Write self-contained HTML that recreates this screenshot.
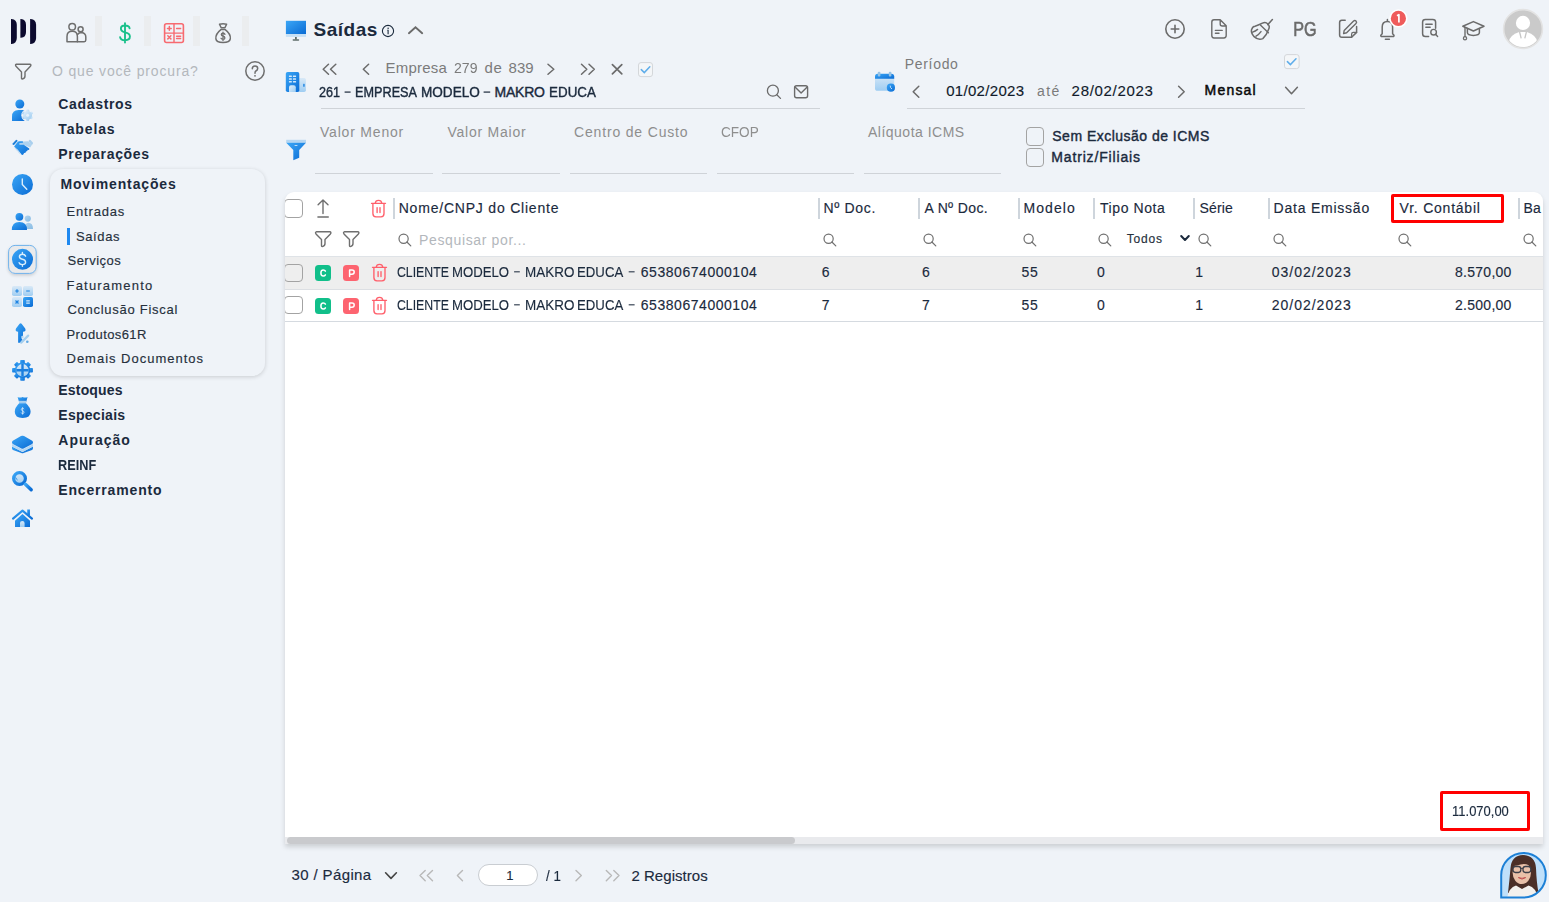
<!DOCTYPE html>
<html><head><meta charset="utf-8"><title>Saídas</title>
<style>
html,body{margin:0;padding:0;}
body{width:1549px;height:902px;overflow:hidden;position:relative;background:#eff3f8;font-family:"Liberation Sans",sans-serif;}
.t{position:absolute;white-space:pre;line-height:1;}
.a{position:absolute;}
svg.a{overflow:visible;}
.strip{position:absolute;top:16px;width:7px;height:30px;background:#ebedef;}
.ul{position:absolute;height:1px;background:#cfd3d8;}
.sep{position:absolute;top:198px;width:2px;height:21px;background:#ced5dc;}
.cb{position:absolute;box-sizing:border-box;border:1.3px solid #a3a3a3;border-radius:4px;background:transparent;}
</style></head>
<body>
<!-- popup menu -->
<div class="a" style="left:50px;top:169px;width:215px;height:207px;border-radius:13px;background:#eff3f8;box-shadow:0 1px 4px rgba(0,0,0,0.16);"></div>
<div class="a" style="left:67px;top:228px;width:3px;height:17px;background:#1e88f0;"></div>

<!-- top strips -->
<div class="strip" style="left:95px"></div>
<div class="strip" style="left:144px"></div>
<div class="strip" style="left:193px"></div>
<div class="strip" style="left:242px"></div>

<!-- underlines -->
<div class="ul" style="left:321px;top:108px;width:499px;"></div>
<div class="ul" style="left:907px;top:108px;width:398px;"></div>
<div class="ul" style="left:315px;top:173px;width:118px;"></div>
<div class="ul" style="left:442px;top:173px;width:118px;"></div>
<div class="ul" style="left:570px;top:173px;width:137px;"></div>
<div class="ul" style="left:717px;top:173px;width:137px;"></div>
<div class="ul" style="left:864px;top:173px;width:137px;"></div>

<!-- checkboxes filter -->
<div class="cb" style="left:1026px;top:127px;width:18px;height:19px;"></div>
<div class="cb" style="left:1026px;top:148px;width:18px;height:19px;"></div>

<!-- table card -->
<div class="a" style="left:285px;top:192px;width:1258px;height:652px;background:#fff;border-radius:9px 9px 0 0;box-shadow:0 3px 5px rgba(0,0,0,0.15);overflow:hidden;">
  <div class="a" style="left:0;top:64px;width:1258px;height:1px;background:#dfe3e7;"></div>
  <div class="a" style="left:0;top:65px;width:1258px;height:32px;background:#eeeeee;"></div>
  <div class="a" style="left:0;top:97px;width:1258px;height:1px;background:#dcdfe3;"></div>
  <div class="a" style="left:0;top:129px;width:1258px;height:1px;background:#d5dae0;"></div>
  <div class="a" style="left:0;top:645px;width:1258px;height:7px;background:#e9eaed;"></div>
  <div class="a" style="left:2px;top:645px;width:508px;height:7px;background:#c9cacd;border-radius:4px;"></div>
  <div class="cb" style="left:-1px;top:7px;width:19px;height:19px;"></div>
  <div class="cb" style="left:-1px;top:72px;width:19px;height:18px;"></div>
  <div class="cb" style="left:-1px;top:104px;width:19px;height:18px;"></div>
</div>
<div class="sep" style="left:393px"></div>
<div class="sep" style="left:818px"></div>
<div class="sep" style="left:918px"></div>
<div class="sep" style="left:1018px"></div>
<div class="sep" style="left:1093px"></div>
<div class="sep" style="left:1193px"></div>
<div class="sep" style="left:1268px"></div>
<div class="sep" style="left:1518px"></div>

<!-- red boxes -->
<div class="a" style="left:1391px;top:194px;width:113px;height:29px;box-sizing:border-box;border:3px solid #ff0000;border-radius:2px;"></div>
<div class="a" style="left:1440px;top:791px;width:90px;height:40px;box-sizing:border-box;border:3px solid #ff0000;border-radius:2px;"></div>

<!-- page input -->
<div class="a" style="left:478px;top:864px;width:60px;height:22px;box-sizing:border-box;border:1px solid #c9cdd2;border-radius:11px;background:#fff;"></div>

<svg class="a" style="left:0;top:0" width="1549" height="902" viewBox="0 0 1549 902">
<defs>
  <linearGradient id="bg1" x1="0" y1="0" x2="1" y2="1"><stop offset="0" stop-color="#3ba6f6"/><stop offset="1" stop-color="#0a6bd4"/></linearGradient>
  <linearGradient id="bl1" x1="0" y1="0" x2="1" y2="1"><stop offset="0" stop-color="#e3f0fb"/><stop offset="1" stop-color="#9ccbf0"/></linearGradient>
  <linearGradient id="ggray" x1="0" y1="0" x2="0" y2="1"><stop offset="0" stop-color="#d9e9f7"/><stop offset="1" stop-color="#9fcdf2"/></linearGradient>
  <linearGradient id="gp2" x1="0" y1="0" x2="1" y2="1"><stop offset="0" stop-color="#b2d4ef"/><stop offset="1" stop-color="#86bbe4"/></linearGradient>
</defs>

<!-- logo -->
<g fill="#0c0a2e">
  <path d="M11,19 H11.5 Q16.8,19.5 16.8,25 V38 Q16.8,43.5 11.5,44 H11 Z"/>
  <path d="M20.4,19 H21 Q26,19.5 26,25 V32 Q26,37.5 21,37.8 H20.4 Z"/>
  <path d="M30.1,19 H30.6 Q36.1,19.5 36.1,25 V38 Q36.1,43.5 30.6,44 H30.1 Z"/>
</g>

<!-- top module icons -->
<g fill="none" stroke="#6e6e6e" stroke-width="1.5" stroke-linecap="round" stroke-linejoin="round">
  <!-- people -->
  <circle cx="72.2" cy="26.8" r="3.3"/>
  <circle cx="80.6" cy="29.2" r="2.5"/>
  <path d="M67,41.7 V36.5 Q67,31.3 72.2,31.3 Q77.4,31.3 77.4,36.5 V41.7 Z"/>
  <path d="M77.4,41.7 H84.2 Q85.8,41.7 85.8,40 V37 Q85.8,33.2 81.6,32.6 Q78.8,32.6 77.5,34.5"/>
  <!-- money bag -->
  <path d="M219.5,24.2 Q223,23.3 226.6,24.2 L224.9,27.8 H221.2 Z"/>
  <path d="M221.2,29.4 H224.9 Q231,34 230.3,38.8 Q229.7,42.5 223,42.5 Q216.4,42.5 215.9,38.8 Q215.3,34 221.2,29.4 Z"/>
</g>
<path d="M225,34.3 Q224.3,33.2 223,33.2 Q221.3,33.2 221.3,34.6 Q221.3,35.8 223,36.2 Q224.9,36.6 224.9,37.9 Q224.9,39.4 223,39.4 Q221.6,39.4 221,38.3 M223,32.2 V40.5" fill="none" stroke="#6e6e6e" stroke-width="1.3" stroke-linecap="round"/>
<!-- green dollar -->
<path d="M129.6,28.3 Q129.2,25.5 125,25.5 Q120.9,25.5 120.9,28.6 Q120.9,31.6 125,32.4 Q129.9,33.3 129.9,36.6 Q129.9,40.3 125,40.3 Q120.6,40.3 120.1,37.2 M125,23.2 V42.6" fill="none" stroke="#19c08b" stroke-width="1.9" stroke-linecap="round"/>
<!-- red calc -->
<rect x="164.6" y="23.7" width="18.8" height="18.8" rx="2" fill="none" stroke="#f76a70" stroke-width="1.6"/>
<path d="M174,23.7 V42.5 M164.6,33.1 H183.4" stroke="#f76a70" stroke-width="1.4"/>
<path d="M167.5,28.4 H171.2 M169.35,26.5 V30.3 M176.6,28.4 H180.6 M167.8,35.8 L170.9,38.9 M170.9,35.8 L167.8,38.9 M176.6,36.2 H180.6 M176.6,38.6 H180.6" stroke="#f76a70" stroke-width="1.5" stroke-linecap="round"/>

<!-- sidebar search filter & help -->
<path transform="translate(-300,-167.6)" d="M316.3,231.8 H330 Q331.6,232.2 330.4,233.9 L325,239.6 V243.6 Q325,246.3 322.3,246.6 Q321.5,246.7 321.5,245.6 V239.6 L316,233.9 Q314.9,232.2 316.3,231.8 Z" fill="none" stroke="#6e6e6e" stroke-width="1.4" stroke-linejoin="round"/>
<circle cx="255" cy="71" r="9.2" fill="none" stroke="#6e6e6e" stroke-width="1.5"/>
<path d="M252.3,68.8 Q252.3,66 255,66 Q257.7,66 257.7,68.5 Q257.7,70.2 255.6,71.2 Q255,71.6 255,73.2" fill="none" stroke="#6e6e6e" stroke-width="1.5" stroke-linecap="round"/>
<circle cx="255" cy="75.8" r="0.9" fill="#6e6e6e"/>

<!-- sidebar blue icons -->
<!-- 1 person gear -->
<circle cx="19.8" cy="104" r="4.5" fill="url(#bg1)"/>
<path d="M12,121 V116.5 Q12,110 18.6,110 H25.5 V121 Z" fill="url(#bg1)"/>
<circle cx="27.6" cy="115.3" r="6.3" fill="#eff3f8"/>
<g transform="translate(27.6,115.3)">
  <g fill="url(#bl1)">
    <rect x="-1.5" y="-5.8" width="3" height="11.6" rx="0.8"/>
    <rect x="-1.5" y="-5.8" width="3" height="11.6" rx="0.8" transform="rotate(60)"/>
    <rect x="-1.5" y="-5.8" width="3" height="11.6" rx="0.8" transform="rotate(120)"/>
    <circle r="4.4"/>
  </g>
  <circle r="1.5" fill="#e6f1fa"/>
</g>
<!-- 2 handshake -->
<g>
  <path d="M12.4,143.7 L15.9,139.9 Q16.6,139.6 17.3,140.3 L17.6,141 L14,145 Q13.2,145.2 12.6,144.6 Z" fill="#1f7fd8"/>
  <path d="M28.3,141.2 L29.6,139.8 Q30.2,139.6 30.8,140.2 L33,142.8 Q33.2,143.6 32.4,144.4 L31.4,145 Z" fill="#a9cfee"/>
  <path d="M19.6,143 Q21,141.4 24,141.4 L28,141.2 L31.8,145 L30.2,147.4 L24.2,145 L20,144.8 Z" fill="#aed2ef"/>
  <path d="M14.1,146.4 L17.4,142.3 Q18,141.3 19.5,141.3 L22.6,141.3 Q23.6,141.9 22.8,142.7 L20.2,142.9 Q19.1,143.3 19.2,144 Q19.4,144.8 20.3,144.8 L23.8,144.8 L29.2,148.5 Q29.7,149.6 28.5,149.9 L27.6,149.7 L27.3,151.1 L26,151.5 L25.5,152.8 L24.1,153.1 L23.3,154.6 Q22.5,155.4 21.7,154.8 L18.2,150.2 Z" fill="url(#bg1)"/>
  <path d="M14.6,147.6 L17.6,151 M16.4,149 L19.2,152.8 M18.2,151 L20.4,154.2" stroke="#b9d8f2" stroke-width="1" opacity="0.9"/>
</g>
<!-- 3 clock -->
<circle cx="22.5" cy="184.4" r="10.5" fill="url(#bg1)"/>
<path d="M22.3,179 V184.5 L26.8,189.3" fill="none" stroke="#dcedfb" stroke-width="1.4" stroke-linecap="round" stroke-linejoin="round"/>
<!-- 4 people -->
<circle cx="27.8" cy="218.6" r="3.1" fill="url(#gp2)"/>
<path d="M24.5,229 Q25,222.8 28.2,222.8 Q33,222.8 33,229 Z" fill="url(#gp2)"/>
<circle cx="19.4" cy="216.8" r="3.9" fill="url(#bg1)"/>
<path d="M11.8,230 Q11.8,222 19.4,222 Q27,222 27,230 Z" fill="url(#bg1)"/>
<!-- 5 dollar selected -->
<filter id="dsh" x="-50%" y="-50%" width="200%" height="200%"><feDropShadow dx="0" dy="1.5" stdDeviation="1.6" flood-color="#000" flood-opacity="0.16"/></filter>
<rect x="8.6" y="245.4" width="27.6" height="28" rx="6.5" fill="#e9eaec" stroke="#6fb2ec" stroke-width="1" filter="url(#dsh)"/>
<circle cx="22.5" cy="259.3" r="10.5" fill="url(#bg1)"/>
<path d="M25.6,256.2 Q24.9,254.2 22.4,254.2 Q19.4,254.2 19.4,256.6 Q19.4,258.7 22.4,259.3 Q25.6,260 25.6,262.3 Q25.6,264.6 22.4,264.6 Q19.6,264.6 19.1,262.6 M22.4,252.4 V254.2 M22.4,264.6 V266.3" fill="none" stroke="#d9eefc" stroke-width="1.4" stroke-linecap="round"/>
<!-- 6 calc -->
<rect x="12" y="286" width="10" height="10" rx="1.8" fill="url(#ggray)"/>
<rect x="23" y="286" width="10" height="10" rx="1.8" fill="url(#ggray)"/>
<rect x="12" y="297" width="10" height="10" rx="1.8" fill="url(#ggray)"/>
<rect x="23" y="297" width="10" height="10" rx="1.8" fill="url(#bg1)"/>
<path d="M15.2,291 H18.8 M17,289.2 V292.8 M26.2,291 H29.8 M15.5,300.5 L18.5,303.5 M18.5,300.5 L15.5,303.5" stroke="#1b82e2" stroke-width="1.2"/>
<path d="M26.2,300.8 H29.8 M26.2,303.2 H29.8" stroke="#d7ebfb" stroke-width="1.2"/>
<!-- 7 arrow percent -->
<path d="M19.6,323.8 Q20.6,322.6 21.6,323.8 L25.2,328.6 Q26,330.2 25.2,331 Q24.6,331.8 23,331.8 V336 L21.4,338.2 L22.4,339.6 L20.6,342.8 H18.1 V331.8 Q16.6,331.8 16,331 Q15.2,330.2 16,328.6 Z" fill="url(#bg1)"/>
<path d="M21.2,342.6 L28.2,335.6" stroke="#a6cfee" stroke-width="2.2" stroke-linecap="round"/>
<circle cx="22.4" cy="337" r="1.2" fill="#b9d9f2"/>
<circle cx="27.3" cy="341.7" r="1.3" fill="#62aae4"/>
<!-- 8 gear plus -->
<g transform="translate(22.5,370.3)">
  <g fill="url(#bg1)">
    <rect x="-2.3" y="-10.4" width="4.6" height="4.2" rx="0.8"/><rect x="-2.3" y="6.2" width="4.6" height="4.2" rx="0.8"/><rect x="-10.4" y="-2.3" width="4.2" height="4.6" rx="0.8"/><rect x="6.2" y="-2.3" width="4.2" height="4.6" rx="0.8"/>
    <g transform="rotate(45)"><rect x="-2.2" y="-10" width="4.4" height="4" rx="0.8"/><rect x="-2.2" y="6" width="4.4" height="4" rx="0.8"/><rect x="-10" y="-2.2" width="4" height="4.4" rx="0.8"/><rect x="6" y="-2.2" width="4" height="4.4" rx="0.8"/></g>
  </g>
  <circle r="7.8" fill="url(#bg1)"/>
  <circle r="6.2" fill="url(#ggray)"/>
  <path d="M-6.2,0 H6.2 M0,-6.2 V6.2" stroke="#1b7fdf" stroke-width="2.4"/>
</g>
<!-- 9 money bag -->
<path d="M17.6,397 Q20,398 22.6,397 Q25.2,398 27.6,397 L26,402.4 H19.2 Z" fill="url(#bg1)"/>
<rect x="19" y="400.8" width="7.2" height="2" fill="#a9d1f1"/>
<path d="M19.2,403.2 H26 Q30.6,407.5 30.6,411.8 Q30.6,418 22.6,418 Q14.8,418 14.8,411.8 Q14.8,407.5 19.2,403.2 Z" fill="url(#bg1)"/>
<path d="M24,409.2 Q23.6,408.3 22.6,408.3 Q21.3,408.3 21.3,409.5 Q21.3,410.5 22.6,410.8 Q24,411.1 24,412.3 Q24,413.5 22.6,413.5 Q21.4,413.5 21.1,412.6 M22.6,407.2 V414.6" fill="none" stroke="#d9ebfa" stroke-width="0.8"/>
<!-- 10 layers -->
<path d="M12,446.4 L22.5,452 L33,446.4 V448.3 Q33,449.4 32,449.9 L23.6,453.1 Q22.5,453.5 21.4,453.1 L13,449.9 Q12,449.4 12,448.3 Z" fill="url(#bg1)"/>
<path d="M12,444 L22.5,449.6 L33,444 V446.5 L22.5,452 L12,446.5 Z" fill="#b5d7f3"/>
<path d="M22.5,435.8 Q23.2,435.7 24,436.1 L32.2,440.8 Q33,441.4 33,442.6 Q33,443.5 32.2,444 L23.6,448.5 Q22.5,449.1 21.4,448.5 L12.8,444 Q12,443.5 12,442.6 Q12,441.4 12.8,440.8 L21,436.1 Q21.8,435.7 22.5,435.8 Z" fill="url(#bg1)"/>
<!-- 11 magnifier -->
<circle cx="19.5" cy="478.5" r="5.9" fill="url(#ggray)" stroke="url(#bg1)" stroke-width="3.2"/>
<path d="M25.4,484.2 L31.2,489.8" stroke="url(#bg1)" stroke-width="3.4" stroke-linecap="round"/>
<path d="M15.6,477.4 Q16.2,479.4 17.6,480" stroke="#1f84e0" stroke-width="0.9" fill="none"/>
<!-- 12 home -->
<path d="M15,520.8 L22.5,514 L30,520.8 V527 H15 Z" fill="url(#bg1)"/>
<rect x="27.2" y="509.5" width="2.7" height="6" fill="url(#bg1)"/>
<path d="M13,518.6 L22.5,510.6 L32,518.6" fill="none" stroke="url(#bg1)" stroke-width="2.1" stroke-linecap="round" stroke-linejoin="round"/>
<path d="M20,527 V523 Q20,521 22.3,521 Q24.6,521 24.6,523 V527 Z" fill="url(#ggray)"/>

<!-- header -->
<!-- monitor -->
<rect x="285.9" y="20.8" width="20.1" height="13.2" fill="url(#bg1)"/>
<rect x="285.9" y="34" width="20.1" height="2.9" fill="#c7e0f5"/>
<rect x="295" y="37" width="1.8" height="2.5" fill="#5f6d6a"/>
<rect x="292.6" y="39.3" width="6.6" height="1.5" rx="0.7" fill="#5f6d6a"/>
<!-- info -->
<circle cx="388" cy="31" r="5.6" fill="none" stroke="#1b2a3d" stroke-width="1.1"/>
<path d="M388.1,30.2 V34.2" stroke="#1b2a3d" stroke-width="1.1"/>
<path d="M387.2,30.2 H388.6" stroke="#1b2a3d" stroke-width="0.8"/>
<circle cx="388.1" cy="28.2" r="0.75" fill="#1b2a3d"/>
<!-- chevron up -->
<path d="M408.9,33.2 L415.5,27.3 L422.2,33.2" fill="none" stroke="#6b6b6b" stroke-width="1.9" stroke-linecap="round"/>
<!-- building -->
<rect x="295.5" y="77.9" width="10.4" height="14.1" rx="1.8" fill="url(#ggray)"/>
<rect x="285.8" y="72" width="13.5" height="20" rx="1.8" fill="url(#bg1)"/>
<path d="M289,92 V87.2 Q289,85.2 291,85.2 H293.8 Q295.8,85.2 295.8,87.2 V92 Z" fill="url(#bl1)"/>
<g fill="#d3e8fa"><rect x="288.9" y="75.4" width="3" height="1.5" rx="0.5"/><rect x="292.9" y="75.4" width="3.2" height="1.5" rx="0.5"/>
<rect x="288.9" y="78.2" width="3" height="1.5" rx="0.5"/><rect x="292.9" y="78.2" width="3.2" height="1.5" rx="0.5"/>
<rect x="288.9" y="81" width="3" height="1.5" rx="0.5"/><rect x="292.9" y="81" width="3.2" height="1.5" rx="0.5"/></g>
<rect x="303" y="83.8" width="1.8" height="3" rx="0.6" fill="#3d95e6"/>
<!-- empresa nav -->
<g fill="none" stroke="#6b6b6b" stroke-width="1.5" stroke-linecap="round" stroke-linejoin="round">
  <path d="M328.5,64.2 L323.2,69.2 L328.5,74.2 M335.8,64.2 L330.5,69.2 L335.8,74.2"/>
  <path d="M368.6,64.2 L363.3,69.2 L368.6,74.2"/>
  <path d="M548,64.2 L553.8,69.2 L548,74.2"/>
  <path d="M581.5,64.2 L586.8,69.2 L581.5,74.2 M589,64.2 L594.3,69.2 L589,74.2"/>
  <path d="M612.4,64.6 L621.8,73.8 M621.8,64.6 L612.4,73.8" stroke-width="1.7"/>
  <circle cx="772.9" cy="90.7" r="5.5" stroke-width="1.3"/>
  <path d="M776.8,94.8 L780.5,98.4" stroke-width="1.3"/>
  <rect x="794.6" y="85.8" width="13" height="11.9" rx="2" stroke-width="1.4"/>
  <path d="M795,87 L801.1,93 L807.2,87" stroke-width="1.4"/>
  <path d="M918.8,86.3 L913.2,91.8 L918.8,97.3"/>
  <path d="M1178.6,86.3 L1184.2,91.8 L1178.6,97.3"/>
  <path d="M1285.6,87.2 L1291.5,93.8 L1297.4,87.2"/>
</g>
<rect x="638.5" y="62.6" width="14" height="14" rx="2.5" fill="#f4f6f8" stroke="#d4d7da" stroke-width="1"/>
<path d="M641.3,69.6 L644.3,72.6 L649.8,66.8" fill="none" stroke="#5fadea" stroke-width="1.5" stroke-linecap="round"/>
<rect x="1284.5" y="54.6" width="14.6" height="14" rx="2.5" fill="#f4f6f8" stroke="#d4d7da" stroke-width="1"/>
<path d="M1287.4,61.6 L1290.4,64.6 L1296,58.8" fill="none" stroke="#5fadea" stroke-width="1.5" stroke-linecap="round"/>
<!-- calendar -->
<rect x="875" y="74" width="19.2" height="16.8" rx="2.6" fill="url(#ggray)"/>
<path d="M875,76.6 Q875,73.7 877.8,73.7 H891.4 Q894.2,73.7 894.2,76.6 V78.8 H875 Z" fill="url(#bg1)"/>
<rect x="877.8" y="71.8" width="2.6" height="4.6" rx="1" fill="#97c3e6"/>
<rect x="888.8" y="71.8" width="2.6" height="4.6" rx="1" fill="#97c3e6"/>
<circle cx="890.9" cy="87.7" r="4.1" fill="url(#bg1)"/>
<path d="M890.2,85.6 Q890,87.8 892,89" fill="none" stroke="#cfe6fa" stroke-width="0.9"/>
<!-- blue filter -->
<rect x="286.2" y="139.8" width="19.8" height="3" fill="#b5d6f2"/>
<path d="M286.2,142.8 H306 L299.2,150 V157.8 L293.3,160.2 V150 Z" fill="url(#bg1)"/>
<rect x="294.6" y="145" width="2.8" height="0.9" fill="#cfe5f8"/>

<!-- table header icons -->
<g fill="none" stroke="#6f6f6f" stroke-width="1.4" stroke-linecap="round" stroke-linejoin="round">
  <path d="M323,213.6 V200.6 M318.1,204.7 L323,200 L328,204.7"/>
  <path d="M318,217 H328.2" stroke-width="1.6"/>
  <path d="M316.3,231.8 H330 Q331.6,232.2 330.4,233.9 L325,239.6 V243.6 Q325,246.3 322.3,246.6 Q321.5,246.7 321.5,245.6 V239.6 L316,233.9 Q314.9,232.2 316.3,231.8 Z"/>
  <path d="M344.3,231.8 H358 Q359.6,232.2 358.4,233.9 L353,239.6 V243.6 Q353,246.3 350.3,246.6 Q349.5,246.7 349.5,245.6 V239.6 L344,233.9 Q342.9,232.2 344.3,231.8 Z"/>
</g>
<g fill="none" stroke="#6f6f6f" stroke-width="1.2" stroke-linecap="round">
  <g id="srch"><circle cx="403.6" cy="238.7" r="4.6"/><path d="M406.9,242 L410.8,245.9"/></g>
  <use href="#srch" x="425"/><use href="#srch" x="525"/><use href="#srch" x="625"/><use href="#srch" x="700"/>
  <use href="#srch" x="800"/><use href="#srch" x="875"/><use href="#srch" x="1000"/><use href="#srch" x="1125"/>
</g>
<path d="M1181.2,236 L1185,240 L1188.8,236" fill="none" stroke="#1b2a3d" stroke-width="2" stroke-linecap="round" stroke-linejoin="round"/>
<!-- trash icons -->
<g fill="none" stroke="#ff5f6b" stroke-width="1.35" stroke-linecap="round" stroke-linejoin="round">
  <g id="trash"><path d="M371.5,203.3 H385.5 M375.2,203.2 Q375.6,200.3 378.5,200.3 Q381.4,200.3 381.8,203.2 M372.9,203.3 V213.6 Q372.9,216.8 376,216.8 H381 Q384,216.8 384,213.6 V203.3"/>
  <path d="M377.1,207.6 V212.6 M380,207.6 V212.6"/></g>
  <use href="#trash" x="1" y="64"/>
  <use href="#trash" x="1" y="97"/>
</g>
<!-- badges -->
<g id="badges">
  <rect x="315" y="265" width="16" height="16" rx="3.5" fill="#11bf8a"/>
  <rect x="343" y="265" width="16" height="16" rx="3.5" fill="#fd6470"/>
  <path d="M325.4,271.2 Q324.8,270 323.3,270 Q320.9,270 320.9,273 Q320.9,276 323.3,276 Q324.8,276 325.4,274.8" fill="none" stroke="#fff" stroke-width="1.5" stroke-linecap="round"/>
  <path d="M349.6,276.6 V270 H352 Q354.2,270 354.2,272.1 Q354.2,274.2 352,274.2 H349.6" fill="none" stroke="#fff" stroke-width="1.5" stroke-linecap="round" stroke-linejoin="round"/>
</g>
<use href="#badges" y="33"/>

<!-- dashes -->
<g fill="#3a4656">
<rect x="344.6" y="91.4" width="6" height="1.4"/><rect x="483.6" y="91.4" width="6.6" height="1.4"/>
<rect x="514.1" y="271.2" width="5.7" height="1.2"/><rect x="628.7" y="271.2" width="5.9" height="1.2"/>
<rect x="514.1" y="304.2" width="5.7" height="1.2"/><rect x="628.7" y="304.2" width="5.9" height="1.2"/>
</g>
<!-- footer icons -->
<g fill="none" stroke-width="1.4" stroke-linecap="round" stroke-linejoin="round">
  <path d="M385.6,872.8 L391,878.4 L396.4,872.8" stroke="#444" stroke-width="1.6"/>
  <path d="M425.2,870.5 L420,875.6 L425.2,880.7 M432.5,870.5 L427.3,875.6 L432.5,880.7" stroke="#b8b8b8"/>
  <path d="M462.5,870.5 L457.4,875.6 L462.5,880.7" stroke="#b8b8b8"/>
  <path d="M576,870.5 L581.3,875.6 L576,880.7" stroke="#b8b8b8"/>
  <path d="M606.3,870.5 L611.5,875.6 L606.3,880.7 M613.8,870.5 L619,875.6 L613.8,880.7" stroke="#b8b8b8"/>
</g>
<!-- assistant avatar -->
<clipPath id="avc"><path d="M1501.2,897.6 V875.3 A22.3,22.3 0 1 1 1523.5,897.6 Z"/></clipPath>
<path d="M1501.2,897.6 V875.3 A22.3,22.3 0 1 1 1523.5,897.6 Z" fill="#bfe0fa"/>
<g clip-path="url(#avc)">
<path d="M1508,893 Q1509.5,880 1510.5,868 Q1511.5,855.5 1523,855 Q1535,855.5 1536,868 Q1536.5,882 1538.5,893 Z" fill="#4b2f27"/>
<ellipse cx="1521.8" cy="872.5" rx="9.2" ry="11.5" fill="#e9c1a9"/>
<path d="M1512.5,866 Q1518,858.5 1529,860 Q1531.5,863 1531.5,868 Q1527,861.5 1517,865.5 Z" fill="#4b2f27"/>
<rect x="1513" y="866.5" width="7.8" height="6" rx="2.4" fill="none" stroke="#3c3f48" stroke-width="1.3"/>
<rect x="1523" y="866.5" width="7.8" height="6" rx="2.4" fill="none" stroke="#3c3f48" stroke-width="1.3"/>
<path d="M1520.8,868.4 H1523" stroke="#3c3f48" stroke-width="1"/>
<path d="M1518.4,877.6 Q1522,880.6 1525.6,877.6 Q1522,879 1518.4,877.6 Z" fill="#fff" stroke="#b83a3a" stroke-width="0.8"/>
<path d="M1507,898 Q1509,887.5 1516,885.5 L1522,889 L1528.5,885.5 Q1536,887.5 1538,898 Z" fill="#f3f1ee"/>
</g>
<path d="M1501.2,897.6 V875.3 A22.3,22.3 0 1 1 1523.5,897.6 Z" fill="none" stroke="#1d80d6" stroke-width="2"/>

<!-- top right icons -->
<g fill="none" stroke="#6b6b6b" stroke-width="1.6" stroke-linecap="round" stroke-linejoin="round">
  <circle cx="1175" cy="29" r="9.2"/>
  <path d="M1175,25.2 V32.8 M1171.2,29 H1178.8"/>
  <path d="M1217.6,19.8 H1214 Q1211.8,19.8 1211.8,22.2 V35.6 Q1211.8,38 1214,38 H1223.8 Q1226.2,38 1226.2,35.6 V25.8 L1220.2,19.8 H1217.6 M1220.2,20.3 V24 Q1220.2,26 1222.2,26 H1226" stroke-width="1.4"/>
  <path d="M1215.4,30.4 H1222.2 M1215.4,33.3 H1219" stroke-width="1.4"/>
  <!-- broom -->
  <path d="M1267.8,24.6 L1272.4,19.6" stroke-width="1.5"/>
  <path d="M1262.4,23.2 Q1265.6,21.6 1267.8,24 Q1270.4,26.4 1268.4,29.8 Q1266.8,35 1262.8,38.6 Q1258.4,40.8 1253.8,36.4 Q1250.6,32.4 1251.6,29.6 Q1252.6,26.4 1255,26.2 Q1259,25 1262.4,23.2 Z" stroke-width="1.5"/>
  <path d="M1260.6,25.2 L1268.4,32.8 M1252.6,32.2 Q1255.4,31.2 1257.6,29.4 M1256,36.2 Q1259.2,34.2 1261,31.6" stroke-width="1.4"/>
  <!-- edit -->
  <path d="M1345.2,20.3 H1341.8 Q1339.6,20.3 1339.6,22.6 V35 Q1339.6,37.3 1341.8,37.3 H1351.6 L1356.6,32.4 V26.6" stroke-width="1.5"/>
  <path d="M1351.6,37.3 V34.2 Q1351.6,32.4 1353.4,32.4 H1356.6" stroke-width="1.3"/>
  <path d="M1343.6,33.6 L1344.2,30.4 L1353.6,21 Q1354.8,19.9 1356,21 Q1357.2,22.2 1356,23.4 L1346.6,32.8 Z" stroke-width="1.4"/>
  <!-- bell -->
  <path d="M1382.2,33.8 V27 Q1382.2,21.4 1387.4,21.4 Q1392.6,21.4 1392.6,27 V33.8 L1394,35.2 Q1394.2,36.6 1392.8,36.6 H1382 Q1380.6,36.6 1380.8,35.2 Z" stroke-width="1.5"/>
  <path d="M1387.4,19.4 V21 M1385.4,39.2 H1389.4" stroke-width="1.5"/>
  <!-- doc search -->
  <path d="M1428.6,36.6 H1425.4 Q1422.6,36.6 1422.6,33.8 V22 Q1422.6,19.4 1425.4,19.4 H1432.8 Q1435.6,19.4 1435.6,22 V28.2" stroke-width="1.5"/>
  <path d="M1425.8,24.2 H1432.2 M1425.8,27.2 H1430.2" stroke-width="1.4"/>
  <circle cx="1433.6" cy="32.2" r="2.8" stroke-width="1.4"/>
  <path d="M1435.6,34.3 L1437.6,36.4" stroke-width="1.4"/>
  <!-- grad cap -->
  <path d="M1473.4,21.6 L1484,26.3 L1473.4,31 L1462.8,26.3 Z" stroke-width="1.5"/>
  <path d="M1467.4,28.5 V32.6 Q1467.4,35.4 1473.4,35.4 Q1479.4,35.4 1479.4,32.6 V28.5" stroke-width="1.5"/>
  <path d="M1465,27.4 V36.6" stroke-width="1.4"/>
  <circle cx="1465" cy="38.3" r="1.6" stroke-width="1.3"/>
</g>
<!-- notification badge -->
<circle cx="1398.4" cy="18.4" r="9.2" fill="#fff"/>
<circle cx="1398.4" cy="18.4" r="7.6" fill="#ef5b5b"/>
<path d="M1397,15.8 L1398.9,14.6 V22.4" fill="none" stroke="#fff" stroke-width="1.7" stroke-linejoin="round"/>
<!-- user avatar -->
<clipPath id="uac"><circle cx="1523" cy="29" r="18"/></clipPath>
<circle cx="1523" cy="29" r="19.4" fill="#cacaca" stroke="#e3e3e3" stroke-width="1.6"/>
<circle cx="1523" cy="22.9" r="7.1" fill="#fff"/>
<g clip-path="url(#uac)">
<path d="M1509,50 V41.5 Q1509.6,35.2 1519.2,31.9 H1526.8 Q1536.4,35.2 1537,41.5 V50 Z" fill="#fff"/>
<path d="M1519.6,32 L1521.2,38.4 M1526.4,32 L1524.8,38.4" stroke="#c6c6c6" stroke-width="1.3"/>
</g>
</svg>


<div class="t" style="left:52.00px;top:64.15px;font-size:14px;font-weight:400;color:#b4b8bd;letter-spacing:0.836px;">O que você procura?</div>
<div class="t" style="left:58.30px;top:97.15px;font-size:14px;font-weight:700;color:#1b2a3d;letter-spacing:0.665px;">Cadastros</div>
<div class="t" style="left:58.30px;top:122.15px;font-size:14px;font-weight:700;color:#1b2a3d;letter-spacing:0.865px;">Tabelas</div>
<div class="t" style="left:58.30px;top:147.15px;font-size:14px;font-weight:700;color:#1b2a3d;letter-spacing:0.673px;">Preparações</div>
<div class="t" style="left:60.40px;top:177.15px;font-size:14px;font-weight:700;color:#1b2a3d;letter-spacing:0.863px;">Movimentações</div>
<div class="t" style="left:66.50px;top:205.00px;font-size:13px;font-weight:400;color:#26303c;letter-spacing:0.824px;-webkit-text-stroke:0.15px #26303c;">Entradas</div>
<div class="t" style="left:76.00px;top:230.00px;font-size:13px;font-weight:400;color:#26303c;letter-spacing:0.605px;-webkit-text-stroke:0.15px #26303c;">Saídas</div>
<div class="t" style="left:67.50px;top:254.00px;font-size:13px;font-weight:400;color:#26303c;letter-spacing:0.479px;-webkit-text-stroke:0.15px #26303c;">Serviços</div>
<div class="t" style="left:66.50px;top:279.00px;font-size:13px;font-weight:400;color:#26303c;letter-spacing:1.203px;-webkit-text-stroke:0.15px #26303c;">Faturamento</div>
<div class="t" style="left:67.50px;top:303.00px;font-size:13px;font-weight:400;color:#26303c;letter-spacing:0.727px;-webkit-text-stroke:0.15px #26303c;">Conclusão Fiscal</div>
<div class="t" style="left:66.50px;top:328.00px;font-size:13px;font-weight:400;color:#26303c;letter-spacing:0.391px;-webkit-text-stroke:0.15px #26303c;">Produtos61R</div>
<div class="t" style="left:66.50px;top:352.00px;font-size:13px;font-weight:400;color:#26303c;letter-spacing:0.990px;-webkit-text-stroke:0.15px #26303c;">Demais Documentos</div>
<div class="t" style="left:58.30px;top:383.15px;font-size:14px;font-weight:700;color:#1b2a3d;letter-spacing:0.182px;">Estoques</div>
<div class="t" style="left:58.30px;top:408.15px;font-size:14px;font-weight:700;color:#1b2a3d;letter-spacing:0.273px;">Especiais</div>
<div class="t" style="left:58.30px;top:433.15px;font-size:14px;font-weight:700;color:#1b2a3d;letter-spacing:0.997px;">Apuração</div>
<div class="t" style="left:58.30px;top:458.15px;font-size:14px;font-weight:700;color:#1b2a3d;transform:scaleX(0.9093);transform-origin:0.00px 0;">REINF</div>
<div class="t" style="left:58.30px;top:483.15px;font-size:14px;font-weight:700;color:#1b2a3d;letter-spacing:0.828px;">Encerramento</div>
<div class="t" style="left:313.60px;top:19.92px;font-size:19px;font-weight:700;color:#1b2a3d;letter-spacing:0.502px;">Saídas</div>
<div class="t" style="left:385.50px;top:60.30px;font-size:15px;font-weight:400;color:#7b7b7b;letter-spacing:0.220px;">Empresa</div>
<div class="t" style="left:454.30px;top:60.30px;font-size:15px;font-weight:400;color:#7b7b7b;transform:scaleX(0.9399);transform-origin:0.00px 0;">279</div>
<div class="t" style="left:484.50px;top:60.30px;font-size:15px;font-weight:400;color:#7b7b7b;letter-spacing:0.758px;">de</div>
<div class="t" style="left:508.50px;top:60.30px;font-size:15px;font-weight:400;color:#7b7b7b;letter-spacing:0.058px;">839</div>
<div class="t" style="left:318.50px;top:85.15px;font-size:14px;font-weight:400;color:#1b2a3d;transform:scaleX(0.8994);transform-origin:0.00px 0;-webkit-text-stroke:0.4px #1b2a3d;">261</div>
<div class="t" style="left:354.50px;top:85.15px;font-size:14px;font-weight:400;color:#1b2a3d;transform:scaleX(0.9042);transform-origin:1.00px 0;-webkit-text-stroke:0.4px #1b2a3d;">EMPRESA</div>
<div class="t" style="left:420.80px;top:85.15px;font-size:14px;font-weight:400;color:#1b2a3d;transform:scaleX(0.9685);transform-origin:1.00px 0;-webkit-text-stroke:0.4px #1b2a3d;">MODELO</div>
<div class="t" style="left:494.60px;top:85.15px;font-size:14px;font-weight:400;color:#1b2a3d;letter-spacing:-0.237px;-webkit-text-stroke:0.4px #1b2a3d;">MAKRO</div>
<div class="t" style="left:548.80px;top:85.15px;font-size:14px;font-weight:400;color:#1b2a3d;transform:scaleX(0.9554);transform-origin:1.00px 0;-webkit-text-stroke:0.4px #1b2a3d;">EDUCA</div>
<div class="t" style="left:904.80px;top:57.15px;font-size:14px;font-weight:400;color:#7b7b7b;letter-spacing:0.675px;">Período</div>
<div class="t" style="left:946.20px;top:83.30px;font-size:15px;font-weight:400;color:#111b2b;letter-spacing:0.308px;-webkit-text-stroke:0.15px #111b2b;">01/02/2023</div>
<div class="t" style="left:1037.00px;top:84.15px;font-size:14px;font-weight:400;color:#7b7b7b;letter-spacing:1.462px;">até</div>
<div class="t" style="left:1071.60px;top:83.30px;font-size:15px;font-weight:400;color:#111b2b;letter-spacing:0.697px;-webkit-text-stroke:0.15px #111b2b;">28/02/2023</div>
<div class="t" style="left:1204.60px;top:83.15px;font-size:14px;font-weight:400;color:#0a0a0a;letter-spacing:1.196px;-webkit-text-stroke:0.5px #0a0a0a;">Mensal</div>
<div class="t" style="left:320.00px;top:125.15px;font-size:14px;font-weight:400;color:#8e8e8e;letter-spacing:0.805px;">Valor Menor</div>
<div class="t" style="left:447.50px;top:125.15px;font-size:14px;font-weight:400;color:#8e8e8e;letter-spacing:0.762px;">Valor Maior</div>
<div class="t" style="left:574.00px;top:125.15px;font-size:14px;font-weight:400;color:#8e8e8e;letter-spacing:0.832px;">Centro de Custo</div>
<div class="t" style="left:720.70px;top:125.15px;font-size:14px;font-weight:400;color:#8e8e8e;transform:scaleX(0.9701);transform-origin:0.00px 0;">CFOP</div>
<div class="t" style="left:868.00px;top:125.15px;font-size:14px;font-weight:400;color:#8e8e8e;letter-spacing:0.490px;">Alíquota ICMS</div>
<div class="t" style="left:1052.30px;top:129.15px;font-size:14px;font-weight:400;color:#1b2a3d;letter-spacing:0.479px;-webkit-text-stroke:0.4px #1b2a3d;">Sem Exclusão de ICMS</div>
<div class="t" style="left:1051.30px;top:150.15px;font-size:14px;font-weight:400;color:#1b2a3d;letter-spacing:0.840px;-webkit-text-stroke:0.4px #1b2a3d;">Matriz/Filiais</div>
<div class="t" style="left:398.70px;top:201.15px;font-size:14px;font-weight:400;color:#1b2a3d;letter-spacing:0.793px;-webkit-text-stroke:0.15px #1b2a3d;">Nome/CNPJ do Cliente</div>
<div class="t" style="left:823.40px;top:201.15px;font-size:14px;font-weight:400;color:#1b2a3d;letter-spacing:0.665px;-webkit-text-stroke:0.15px #1b2a3d;">Nº Doc.</div>
<div class="t" style="left:924.50px;top:201.15px;font-size:14px;font-weight:400;color:#1b2a3d;letter-spacing:0.345px;-webkit-text-stroke:0.15px #1b2a3d;">A Nº Doc.</div>
<div class="t" style="left:1023.50px;top:201.15px;font-size:14px;font-weight:400;color:#1b2a3d;letter-spacing:1.074px;-webkit-text-stroke:0.15px #1b2a3d;">Modelo</div>
<div class="t" style="left:1100.00px;top:201.15px;font-size:14px;font-weight:400;color:#1b2a3d;letter-spacing:0.576px;-webkit-text-stroke:0.15px #1b2a3d;">Tipo Nota</div>
<div class="t" style="left:1199.50px;top:201.15px;font-size:14px;font-weight:400;color:#1b2a3d;letter-spacing:0.126px;-webkit-text-stroke:0.15px #1b2a3d;">Série</div>
<div class="t" style="left:1273.60px;top:201.15px;font-size:14px;font-weight:400;color:#1b2a3d;letter-spacing:0.767px;-webkit-text-stroke:0.15px #1b2a3d;">Data Emissão</div>
<div class="t" style="left:1399.60px;top:201.15px;font-size:14px;font-weight:400;color:#1b2a3d;letter-spacing:0.769px;-webkit-text-stroke:0.15px #1b2a3d;">Vr. Contábil</div>
<div class="t" style="left:419.00px;top:233.15px;font-size:14px;font-weight:400;color:#b3b7bc;letter-spacing:0.641px;">Pesquisar por...</div>
<div class="t" style="left:1523.60px;top:201.15px;font-size:14px;font-weight:400;color:#1b2a3d;letter-spacing:0.162px;-webkit-text-stroke:0.15px #1b2a3d;">Ba</div>
<div class="t" style="left:1126.70px;top:232.84px;font-size:12px;font-weight:400;color:#26303c;letter-spacing:0.820px;-webkit-text-stroke:0.15px #26303c;">Todos</div>
<div class="t" style="left:396.70px;top:265.15px;font-size:14px;font-weight:400;color:#1b2a3d;transform:scaleX(0.8778);transform-origin:0.00px 0;-webkit-text-stroke:0.15px #1b2a3d;">CLIENTE</div>
<div class="t" style="left:451.80px;top:265.15px;font-size:14px;font-weight:400;color:#1b2a3d;transform:scaleX(0.9400);transform-origin:1.00px 0;-webkit-text-stroke:0.15px #1b2a3d;">MODELO</div>
<div class="t" style="left:524.50px;top:265.15px;font-size:14px;font-weight:400;color:#1b2a3d;transform:scaleX(0.9614);transform-origin:1.00px 0;-webkit-text-stroke:0.15px #1b2a3d;">MAKRO</div>
<div class="t" style="left:577.40px;top:265.15px;font-size:14px;font-weight:400;color:#1b2a3d;transform:scaleX(0.9411);transform-origin:1.00px 0;-webkit-text-stroke:0.15px #1b2a3d;">EDUCA</div>
<div class="t" style="left:640.80px;top:265.15px;font-size:14px;font-weight:400;color:#1b2a3d;letter-spacing:0.537px;-webkit-text-stroke:0.15px #1b2a3d;">65380674000104</div>
<div class="t" style="left:821.80px;top:265.15px;font-size:14px;font-weight:400;color:#1b2a3d;-webkit-text-stroke:0.15px #1b2a3d;">6</div>
<div class="t" style="left:922.00px;top:265.15px;font-size:14px;font-weight:400;color:#1b2a3d;-webkit-text-stroke:0.15px #1b2a3d;">6</div>
<div class="t" style="left:1021.50px;top:265.15px;font-size:14px;font-weight:400;color:#1b2a3d;letter-spacing:0.714px;-webkit-text-stroke:0.15px #1b2a3d;">55</div>
<div class="t" style="left:1097.00px;top:265.15px;font-size:14px;font-weight:400;color:#1b2a3d;-webkit-text-stroke:0.15px #1b2a3d;">0</div>
<div class="t" style="left:1195.20px;top:265.15px;font-size:14px;font-weight:400;color:#1b2a3d;-webkit-text-stroke:0.15px #1b2a3d;">1</div>
<div class="t" style="left:1271.70px;top:265.15px;font-size:14px;font-weight:400;color:#1b2a3d;letter-spacing:1.002px;-webkit-text-stroke:0.15px #1b2a3d;">03/02/2023</div>
<div class="t" style="left:1455.00px;top:265.15px;font-size:14px;font-weight:400;color:#1b2a3d;letter-spacing:0.270px;-webkit-text-stroke:0.15px #1b2a3d;">8.570,00</div>
<div class="t" style="left:396.70px;top:298.15px;font-size:14px;font-weight:400;color:#1b2a3d;transform:scaleX(0.8778);transform-origin:0.00px 0;-webkit-text-stroke:0.15px #1b2a3d;">CLIENTE</div>
<div class="t" style="left:451.80px;top:298.15px;font-size:14px;font-weight:400;color:#1b2a3d;transform:scaleX(0.9400);transform-origin:1.00px 0;-webkit-text-stroke:0.15px #1b2a3d;">MODELO</div>
<div class="t" style="left:524.50px;top:298.15px;font-size:14px;font-weight:400;color:#1b2a3d;transform:scaleX(0.9614);transform-origin:1.00px 0;-webkit-text-stroke:0.15px #1b2a3d;">MAKRO</div>
<div class="t" style="left:577.40px;top:298.15px;font-size:14px;font-weight:400;color:#1b2a3d;transform:scaleX(0.9411);transform-origin:1.00px 0;-webkit-text-stroke:0.15px #1b2a3d;">EDUCA</div>
<div class="t" style="left:640.80px;top:298.15px;font-size:14px;font-weight:400;color:#1b2a3d;letter-spacing:0.537px;-webkit-text-stroke:0.15px #1b2a3d;">65380674000104</div>
<div class="t" style="left:821.80px;top:298.15px;font-size:14px;font-weight:400;color:#1b2a3d;-webkit-text-stroke:0.15px #1b2a3d;">7</div>
<div class="t" style="left:922.00px;top:298.15px;font-size:14px;font-weight:400;color:#1b2a3d;-webkit-text-stroke:0.15px #1b2a3d;">7</div>
<div class="t" style="left:1021.50px;top:298.15px;font-size:14px;font-weight:400;color:#1b2a3d;letter-spacing:0.714px;-webkit-text-stroke:0.15px #1b2a3d;">55</div>
<div class="t" style="left:1097.00px;top:298.15px;font-size:14px;font-weight:400;color:#1b2a3d;-webkit-text-stroke:0.15px #1b2a3d;">0</div>
<div class="t" style="left:1195.20px;top:298.15px;font-size:14px;font-weight:400;color:#1b2a3d;-webkit-text-stroke:0.15px #1b2a3d;">1</div>
<div class="t" style="left:1271.70px;top:298.15px;font-size:14px;font-weight:400;color:#1b2a3d;letter-spacing:1.002px;-webkit-text-stroke:0.15px #1b2a3d;">20/02/2023</div>
<div class="t" style="left:1455.00px;top:298.15px;font-size:14px;font-weight:400;color:#1b2a3d;letter-spacing:0.270px;-webkit-text-stroke:0.15px #1b2a3d;">2.500,00</div>
<div class="t" style="left:1452.00px;top:804.15px;font-size:14px;font-weight:400;color:#1b2a3d;transform:scaleX(0.9263);transform-origin:1.00px 0;-webkit-text-stroke:0.15px #1b2a3d;">11.070,00</div>
<div class="t" style="left:291.50px;top:867.30px;font-size:15px;font-weight:400;color:#1b2a3d;letter-spacing:0.375px;-webkit-text-stroke:0.15px #1b2a3d;">30 / Página</div>
<div class="t" style="left:506.30px;top:869.00px;font-size:13px;font-weight:400;color:#1b2a3d;-webkit-text-stroke:0.15px #1b2a3d;">1</div>
<div class="t" style="left:545.90px;top:868.30px;font-size:15px;font-weight:400;color:#1b2a3d;transform:scaleX(0.8877);transform-origin:0.00px 0;-webkit-text-stroke:0.15px #1b2a3d;">/ 1</div>
<div class="t" style="left:631.40px;top:868.30px;font-size:15px;font-weight:400;color:#1b2a3d;letter-spacing:0.044px;-webkit-text-stroke:0.15px #1b2a3d;">2 Registros</div>
<div class="t" style="left:1292.90px;top:19.07px;font-size:20px;font-weight:400;color:#6b6b6b;transform:scaleX(0.8083);transform-origin:1.00px 0;-webkit-text-stroke:0.6px #6b6b6b;">PG</div>
</body></html>
